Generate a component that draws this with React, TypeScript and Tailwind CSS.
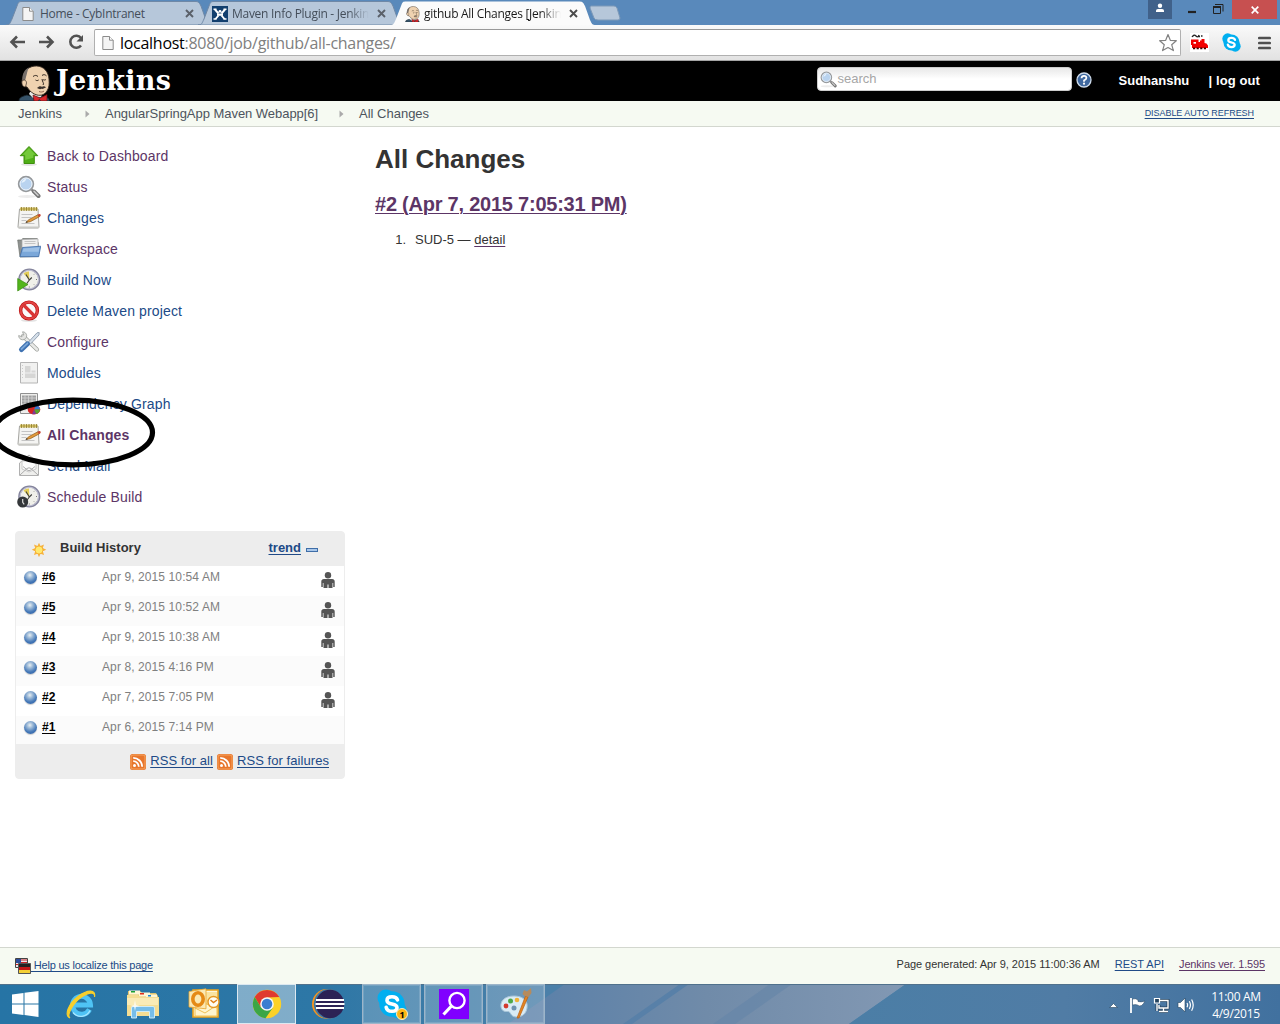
import React from "react";

const ARIAL = "font-['Liberation_Sans',Arial,sans-serif]";
const SEGOE = "font-['Open_Sans','Noto_Sans',sans-serif]";

/* ---------- Browser chrome icons ---------- */

function PageIcon({ className = "" }: { className?: string }) {
  return (
    <svg className={className} width="12" height="14" viewBox="0 0 12 14" fill="none">
      <path d="M.8.5h6.700l3.700 3.700v9.300H.8z" fill="#f4f4f4" stroke="#8b8b8b" />
      <path d="M7.500.5v3.700h3.700" stroke="#8b8b8b" fill="#fff" />
    </svg>
  );
}

function MavenIcon() {
  return (
    <svg width="16" height="16" viewBox="0 0 16 16">
      <path d="M0 0h16v16H0z" fill="#123f6e" />
      <path d="M3 3.500l3.500 4M13 3.500L9.500 7.500M3.500 13L6.500 9.500M12.500 13L9.500 9.500" stroke="#fff" strokeWidth="1.900" />
      <path d="M1.500 3.200h3M11.500 3.200h3M1.500 13h3M11.500 13h3" stroke="#fff" strokeWidth="1.500" />
      <path d="M5 7.500h6v2.300H5z" fill="#fff" />
      <circle cx="8" cy="5.300" r="1.400" fill="#fff" />
    </svg>
  );
}

function Butler({ width, height }: { width: number; height: number }) {
  return (
    <svg width={width} height={height} viewBox="0 0 33 36" preserveAspectRatio="none">
      <path d="M1 36c0-3 2-4.500 8-6l6 2 8-1c6 1 8 2 8.500 5z" fill="#36536a" stroke="#16222b" strokeWidth=".8" />
      <path d="M11 29l4 4 8-1 1-3-4-3-8 1z" fill="#e9e9e6" />
      <path d="M5 12C6 5 12 .8 18.500 1 26 1.200 30.500 7 31 14c.3 5 .4 8-2 12-2 3.500-6 5-10 4-4-.8-8-4.500-10-8-3 0-5.500-3-5-6 .2-1.500 .5-2.500 1-4z" fill="#efd2b0" stroke="#352a22" strokeWidth=".9" />
      <path d="M4.500 16C3.500 9 7 4 11 2.500 9 6 9 9 8 12l-1 4z" fill="#77706b" />
      <path d="M4 16c2.500-2 4.500-.5 4.500 2l-1 4c-3 0-4-3-3.500-6z" fill="#efd2b0" stroke="#352a22" strokeWidth=".7" />
      <path d="M15 11.500c2-1.500 3.500-1.300 5 0M24 10.500c1.500-1.300 3-1 4.500.4M17.500 15c1 .8 2.200.8 3.200 0M25 14.500c.8.700 2 .7 2.900 0M24 14c.3 3 2.500 4.500 1 6" stroke="#352a22" strokeWidth="1" fill="none" />
      <path d="M19 23c2-2 3.500-2.300 5-1.200 1.500-1 3-.5 4 .6-2.500.7-2.700 1.800-4.500 1.400-1.500.7-3 .2-4.500-.8z" fill="#3c332e" />
      <path d="M21 26.500c2 .8 3.500.6 5-.4" stroke="#7c4b3a" strokeWidth=".8" fill="none" />
      <path d="M15 30l6 2.500 1 .5 7-3.500v6.500h-6l-1.500-1.500-2 1.500H16z" fill="#d8262b" stroke="#5d1013" strokeWidth=".7" />
    </svg>
  );
}

function CloseIcon({ active = false }: { active?: boolean }) {
  return (
    <svg width="9" height="9" viewBox="0 0 9 9" className="shrink-0">
      <path d="M1 1l7 7M8 1L1 8" stroke={active ? "#4c4c4c" : "#5a6069"} strokeWidth="1.900" />
    </svg>
  );
}

type TabProps = {
  title: string;
  icon: React.ReactNode;
  active?: boolean;
  className: string;
  titleClass: string;
};

function Tab({ title, icon, active = false, className, titleClass }: TabProps) {
  return (
    <div className={`relative flex h-[25px] shrink-0 items-center pl-[14px] ${className}`}>
      <svg className="absolute inset-0 h-full w-full" viewBox="0 0 206 25" preserveAspectRatio="none">
        <path
          d="M0 25C4 25 4 23 6 19L11 6C12.500 2 13 1.500 16 1.500H189C192 1.500 193 2 195 6L200 20C202 24 202 25 206 25Z"
          fill={active ? "#fbfbfb" : "#b6c7da"}
          stroke={active ? "none" : "#6f88a6"}
          strokeWidth="1"
        />
      </svg>
      <div className="relative mt-[2px] flex w-4 shrink-0 justify-center">{icon}</div>
      <div
        className={`relative mt-[2px] overflow-hidden whitespace-nowrap text-[12px] tracking-[-0.28px] ${titleClass} ${
          active ? "text-[#1a1a1a]" : "text-[#444e5a]"
        }`}
      >
        {title}
      </div>
      <div className="relative mt-[2px] ml-auto mr-[18px]">
        <CloseIcon active={active} />
      </div>
    </div>
  );
}

function TabStrip() {
  return (
    <div className={`flex h-[25px] bg-[#5989bb] pl-[6px] ${SEGOE}`}>
      <Tab title="Home - CybIntranet" icon={<PageIcon />} className="w-[206px]" titleClass="ml-1 w-[137px]" />
      <Tab
        title="Maven Info Plugin - Jenkin"
        icon={<MavenIcon />}
        className="-ml-[14px] w-[206px]"
        titleClass="ml-1 w-[137px] [mask-image:linear-gradient(to_right,black_85%,transparent)]"
      />
      <Tab
        title="github All Changes [Jenkin"
        icon={<Butler width={15} height={16} />}
        active
        className="z-10 -ml-[14px] w-[206px]"
        titleClass="ml-1 w-[137px] [mask-image:linear-gradient(to_right,black_85%,transparent)]"
      />
      <svg width="32" height="16" viewBox="0 0 32 16" className="-ml-[7px] mt-[5px] shrink-0">
        <path d="M2 1H25Q27 1 28 3L31 13Q31 15 29 15H9Q6 15 5 13L1 3Q1 1 2 1Z" fill="#b6c7da" stroke="#7d99b8" />
      </svg>
      <div className="ml-auto flex shrink-0 items-start">
        <div className="flex h-[19px] w-6 items-center justify-center bg-[#40618a]">
          <svg className="-mt-[3px]" width="10" height="10" viewBox="0 0 10 10" fill="#fff">
            <circle cx="5" cy="2.800" r="2.200" />
            <path d="M1 9V7.500q0-1.500 2-1.500h4q2 0 2 1.500V9z" />
          </svg>
        </div>
        <svg width="60" height="19" viewBox="0 0 60 19" fill="none">
          <path d="M16 12h8" stroke="#222" strokeWidth="2.200" />
          <path d="M41.500 6.500h7v7h-7zM43 4.500h8v7" stroke="#222" />
          <path d="M41 7h8" stroke="#222" strokeWidth="2" />
        </svg>
        <div className="mr-[3px] flex h-[19px] w-[45px] items-center justify-center bg-[#c75050]">
          <svg width="8" height="8" viewBox="0 0 8 8">
            <path d="M.7.7l6.600 6.600M7.300.7L.7 7.300" stroke="#fff" strokeWidth="1.700" />
          </svg>
        </div>
      </div>
    </div>
  );
}

function Toolbar() {
  return (
    <div className="flex h-9 items-center border-b border-[#a5a5a5] bg-linear-to-b from-[#fafafa] to-[#e2e2e2] pl-[9px]">
      <svg className="-mt-px" width="78" height="20" viewBox="0 0 78 20" fill="none" stroke="#525252" strokeWidth="2.600">
        <path d="M2.500 10H16M8 4.500L2.500 10 8 15.500" />
        <path d="M30 10h13.500M38 4.500L43.500 10 38 15.500" />
        <path d="M72 6A6 6 0 1 0 72 13.500" />
        <path d="M74 3v6.500h-6.500z" fill="#525252" stroke="none" />
      </svg>
      <div className="ml-[7px] flex h-[27px] w-[1087px] shrink-0 items-center rounded-[2px] border border-[#b0b0b0] border-t-[#999] bg-white pl-[7px] pr-[2px]">
        <PageIcon />
        <div className={`ml-[6px] whitespace-nowrap text-[16px] leading-none tracking-[-0.28px] text-[#808080] ${SEGOE}`}>
          <span className="text-black">localhost</span>:8080/job/github/all-changes/
        </div>
        <svg className="ml-auto" width="20" height="20" viewBox="0 0 20 20">
          <path d="M10 1.500l2.300 5.800 6 .4-4.600 4 1.700 5.900L10 14.500l-5.400 3.100 1.700-5.900-4.600-4 6-.4z" fill="#fff" stroke="#828282" strokeWidth="1.200" strokeLinejoin="round" />
        </svg>
      </div>
      <svg className="ml-[9px] shrink-0" width="19" height="19" viewBox="0 0 19 19">
        <path d="M0 0h19v19H0z" fill="#fff" />
        <path d="M2 4q2-3 4-1t3-1M8 3.500h2M11 3h1.500" stroke="#222" strokeWidth="1.300" fill="none" />
        <path d="M1 6.500h7.500V9H10V7.500h1.500V6h3v4l2 .5 1.500 2V15H2v-3H1z" fill="#f20000" />
        <path d="M3.500 9H6v1.700H3.500z" fill="#fff" />
        <path d="M3 15.300h14" stroke="#400" strokeWidth="1.800" strokeDasharray="2.200 1.400" />
      </svg>
      <SkypeMark className="ml-[13px] shrink-0" size={19} />
      <svg className="ml-[17px] shrink-0" width="13" height="14" viewBox="0 0 13 14">
        <path d="M1.300 2h10.400M1.300 7h10.400M1.300 12h10.400" stroke="#505050" strokeWidth="2.700" strokeLinecap="round" />
      </svg>
    </div>
  );
}

function SkypeMark({ size, className = "" }: { size: number; className?: string }) {
  return (
    <svg className={className} width={size} height={size} viewBox="0 0 30 30">
      <circle cx="9" cy="9" r="8.500" fill="#00aff0" />
      <circle cx="21" cy="21" r="8.500" fill="#00aff0" />
      <circle cx="15" cy="15" r="12.700" fill="#00aff0" />
      <path d="M20.500 10.800C19.500 8.300 17.500 7.800 15 7.800c-3 0-5 1.400-5 3.600 0 2.700 2.500 3.100 5 3.600 2.800.6 5 1.300 5 3.700 0 2.300-2 3.600-5 3.600-3.200 0-5.300-1.500-5.800-4" fill="none" stroke="#fff" strokeWidth="3.600" strokeLinecap="round" />
    </svg>
  );
}

/* ---------- Jenkins header ---------- */

function Magnifier({ size }: { size: number }) {
  return (
    <svg width={size} height={size} viewBox="0 0 24 24">
      <ellipse cx="10" cy="21.500" rx="9" ry="1.500" fill="#ececec" />
      <path d="M14 14l3 3" stroke="#8d8d8d" strokeWidth="2.500" />
      <path d="M17 16.500l4.500 4.500" stroke="#777" strokeWidth="4" strokeLinecap="round" />
      <path d="M17 16.300l4 4" stroke="#d0d0d0" strokeWidth="1.500" strokeLinecap="round" />
      <circle cx="9" cy="9" r="7.300" fill="#b9d3ef" stroke="#96999c" strokeWidth="1.800" />
      <circle cx="9" cy="9" r="6" fill="none" stroke="#eef4fa" strokeWidth="1" />
      <path d="M4.500 8q1-4 5-4.500-1 3.500-5 4.500z" fill="#e6f1fb" />
    </svg>
  );
}

function Header() {
  return (
    <header className={`flex h-10 items-center bg-black pl-[18px] text-[13px] font-bold text-white ${ARIAL}`}>
      <div className="mt-[4px]">
        <Butler width={33} height={36} />
      </div>
      <div className="ml-[5px] w-[125px] font-['DejaVu_Serif',serif] text-[27px] leading-[38px] tracking-[0.25px]">Jenkins</div>
      <div className="-mt-[4px] ml-auto flex h-6 w-[255px] items-center rounded-[4px] border border-[#ccc] bg-white bg-linear-to-b from-[#e8e8e8] via-white to-white pl-[2px]">
        <Magnifier size={17} />
        <span className="ml-[1px] font-normal text-[#a6a6a6]">search</span>
      </div>
      <svg className="-mt-[2px] ml-[4px]" width="16" height="16" viewBox="0 0 16 16">
        <circle cx="8" cy="8" r="7" fill="#3f689f" stroke="#cfdcec" strokeWidth="1.300" />
        <path d="M5.500 6.200Q5.700 3.900 8 3.900t2.400 2Q10.400 7.200 8 8.400v1.300" fill="none" stroke="#fff" strokeWidth="1.700" />
        <circle cx="8" cy="11.700" r="1.100" fill="#fff" />
      </svg>
      <span className="ml-[27px] w-[90px]">Sudhanshu</span>
      <span className="mr-[20px] whitespace-nowrap tracking-[0.1px]">| log out</span>
    </header>
  );
}

function Chevron() {
  return (
    <svg width="5" height="8" viewBox="0 0 5 8">
      <path d="M.5.5L4.500 4 .5 7.500z" fill="#aaa" />
    </svg>
  );
}

function Breadcrumbs() {
  return (
    <nav className={`flex h-[26px] items-center border-b border-[#d3d7cf] bg-[#f6faf2] pl-[18px] pr-[26px] text-[13px] text-[#4d545d] ${ARIAL}`}>
      <span className="w-[67px]">Jenkins</span>
      <Chevron />
      <span className="ml-[15px] w-[234px] whitespace-nowrap tracking-[-0.04px]">AngularSpringApp Maven Webapp[6]</span>
      <Chevron />
      <span className="ml-[15px]">All Changes</span>
      <a className="ml-auto text-[9px] tracking-[-0.05px] text-[#204a87] underline underline-offset-2">DISABLE AUTO REFRESH</a>
    </nav>
  );
}

/* ---------- Side panel icons ---------- */

function UpArrow() {
  return (
    <svg width="24" height="24" viewBox="0 0 24 24">
      <ellipse cx="12" cy="20.500" rx="8" ry="1.500" fill="#e3e3e3" />
      <path d="M12 2.500l8.800 9.200H17.300V19.500H7V11.700H3.200z" fill="#4fae17" stroke="#3f8f0d" strokeLinejoin="round" />
      <path d="M12 4l6.500 6.800h-2.200v3L8.200 16v-5.200H5.500z" fill="#74c93a" />
    </svg>
  );
}

function Notepad() {
  return (
    <svg width="24" height="24" viewBox="0 0 24 24">
      <path d="M2.500 3h18.500L22 21q0 1-1 1H2q-1 0-1-1z" fill="#f4f4f2" stroke="#a5a5a1" />
      <path d="M1 20.500h21v1.500H1z" fill="#c9c9c4" />
      <path d="M3 1.500h17.500v3H3z" fill="#d3c063" />
      <path d="M4.500 1v4M7 1v4M9.500 1v4M12 1v4M14.500 1v4M17 1v4M19.500 1v4" stroke="#8d7a2c" strokeWidth=".8" />
      <path d="M4.500 8.500h11M4.500 11.500h10M4.500 14.500h5M4.500 17.500h13" stroke="#c4c4c4" />
      <path d="M9 16.500l2.500-2.700L21 8.700l1.500 2-9.200 5z" fill="#e39a3c" stroke="#8b5b1b" strokeWidth=".7" />
      <path d="M20.500 9l1.500-1q1.500-.3 1.800 1.200l-.7 1.200-1.300.6z" fill="#c54532" />
      <path d="M8.500 16.800l2.300-.6-1-1.200z" fill="#333" />
    </svg>
  );
}

function FolderIcon() {
  return (
    <svg width="24" height="24" viewBox="0 0 24 24">
      <path d="M.7 3h4l1-1.500h14.500v4h1v14L3 20z" fill="#8f9290" stroke="#6f726f" strokeWidth=".7" />
      <path d="M5 2.500l16-.5v10H5z" fill="#efefef" stroke="#a7a7a7" strokeWidth=".7" />
      <path d="M7.500 4.500h11M7.500 6.500h11" stroke="#c4c4c4" />
      <path d="M5.500 10.500L23.700 9.200l-2 10.500H3z" fill="#7aa7d9" stroke="#3d6ca8" strokeWidth=".8" />
      <path d="M6.500 11.500l16-1.200-.8 4.400H5.500z" fill="#9dc0e6" />
    </svg>
  );
}

function Clock({ variant }: { variant: "build" | "schedule" }) {
  return (
    <svg width="24" height="24" viewBox="0 0 24 24">
      <circle cx="12.300" cy="11.500" r="10" fill="#f0f0ea" stroke="#84849c" strokeWidth="2.200" />
      <circle cx="12.300" cy="11.500" r="9.300" fill="none" stroke="#c9c9dc" strokeWidth=".9" />
      <path d="M12.300 12L6.500 5.500q3-2.500 5.500-2z" fill="#e3cd57" />
      <path d="M9 6.500l3.300 5.500-2.500 3.500M12.300 12l2.500-2.500" stroke="#43433f" strokeWidth="1.100" fill="none" />
      <path d="M19 11.500h1M12.300 18.500v1M17 16.500l.6.600M17 6.500l.6-.6" stroke="#777" />
      {variant === "build" ? (
        <path d="M.7 10.500L11 16.500.7 23z" fill="#52b51c" stroke="#3b8c12" strokeWidth=".7" />
      ) : (
        <>
          <circle cx="5.700" cy="17" r="5.500" fill="#34373a" />
          <path d="M5.700 14v3.300l1.500 2" stroke="#ddd" strokeWidth="1.200" fill="none" />
        </>
      )}
    </svg>
  );
}

function NoEntry() {
  return (
    <svg width="24" height="24" viewBox="0 0 24 24">
      <ellipse cx="12" cy="21.500" rx="8" ry="1.300" fill="#e3e3e3" />
      <circle cx="12" cy="11.500" r="8.400" fill="#fafafa" stroke="#b80f0f" strokeWidth="3.400" />
      <circle cx="12" cy="11.500" r="8.400" fill="none" stroke="#e24444" strokeWidth="2.100" />
      <path d="M6 5.500l12 12" stroke="#d93636" strokeWidth="3.200" />
    </svg>
  );
}

function ToolsIcon() {
  return (
    <svg width="24" height="24" viewBox="0 0 24 24">
      <path d="M6 6l14 13.500" stroke="#9b9e9a" strokeWidth="4" strokeLinecap="round" />
      <path d="M6 6l14 13.500" stroke="#e8e9e7" strokeWidth="2.600" strokeLinecap="round" />
      <path d="M5.500 1.800A4 4 0 1 1 1.700 5.500l3 1.300 2-2z" fill="#e4e4e2" stroke="#9b9e9a" strokeWidth=".8" />
      <path d="M11.500 12L20 2.800l2.200-.3L22 5l-8.500 9" fill="#d5dfe9" stroke="#8091a5" strokeWidth=".8" />
      <path d="M4.500 19.500L10.500 13.800" stroke="#3f72b2" strokeWidth="5" strokeLinecap="round" />
      <path d="M4.500 19L10.500 13.300" stroke="#7ca7d8" strokeWidth="1.800" strokeLinecap="round" />
    </svg>
  );
}

function ModulesIcon() {
  return (
    <svg width="24" height="24" viewBox="0 0 24 24">
      <path d="M3.500 1.500h17v20.500h-17z" fill="#f1f1f0" stroke="#b5b5b5" />
      <path d="M8 5h5.500v6.500H8zM14.500 9.500h4v2h-4zM8 12.500h10.500v4.500H8z" fill="#d6d6d5" />
      <path d="M5.500 4v15" stroke="#ccc" strokeDasharray="1 2" />
    </svg>
  );
}

function GraphIcon() {
  return (
    <svg width="24" height="24" viewBox="0 0 24 24">
      <path d="M3.500 1.500h17v20h-17z" fill="#eeeeec" stroke="#909090" />
      <path d="M5 3.500h14v9H5z" fill="#a0a0a0" />
      <path d="M5 6h14M5 9h14M5 12h14M5 15h14M8 3v16M11.500 3v16M15 3v16" stroke="#d5d5d5" strokeWidth=".8" />
      <ellipse cx="17" cy="17.500" rx="6.300" ry="5" fill="#d62424" />
      <path d="M17 17.500l2-4.500q4 1 4 4.500z" fill="#3878d0" />
      <path d="M17 17.500h6q-.5 3.500-4 4.500z" fill="#59a52c" />
      <path d="M17 17.500l2 4.500-4 .3z" fill="#7d3b96" />
    </svg>
  );
}

function MailIcon() {
  return (
    <svg width="24" height="24" viewBox="0 0 24 24">
      <path d="M2.500 9L12 1 21.500 9v12.500h-19z" fill="#efefed" stroke="#b0b0b0" />
      <path d="M5 7h14v8l-7 3-7-3z" fill="#fbfbfb" stroke="#cacaca" />
      <path d="M3 21l7-6.500q2-1.500 4 0l7 6.500M6 12.500l5 4h2l5-4" fill="none" stroke="#adadad" />
    </svg>
  );
}

const BLUE = "text-[#204a87]";
const VISITED = "text-[#5c3566]";

const tasks = [
  { label: "Back to Dashboard", icon: <UpArrow />, tone: VISITED },
  { label: "Status", icon: <Magnifier size={24} />, tone: VISITED },
  { label: "Changes", icon: <Notepad />, tone: BLUE },
  { label: "Workspace", icon: <FolderIcon />, tone: VISITED },
  { label: "Build Now", icon: <Clock variant="build" />, tone: BLUE },
  { label: "Delete Maven project", icon: <NoEntry />, tone: BLUE },
  { label: "Configure", icon: <ToolsIcon />, tone: VISITED },
  { label: "Modules", icon: <ModulesIcon />, tone: BLUE },
  { label: "Dependency Graph", icon: <GraphIcon />, tone: BLUE },
  { label: "All Changes", icon: <Notepad />, tone: "font-bold text-[#5c3566]" },
  { label: "Send Mail", icon: <MailIcon />, tone: BLUE },
  { label: "Schedule Build", icon: <Clock variant="schedule" />, tone: VISITED },
];

/* ---------- Build history ---------- */

const builds = [
  { id: "#6", date: "Apr 9, 2015 10:54 AM", user: true },
  { id: "#5", date: "Apr 9, 2015 10:52 AM", user: true },
  { id: "#4", date: "Apr 9, 2015 10:38 AM", user: true },
  { id: "#3", date: "Apr 8, 2015 4:16 PM", user: true },
  { id: "#2", date: "Apr 7, 2015 7:05 PM", user: true },
  { id: "#1", date: "Apr 6, 2015 7:14 PM", user: false },
];

function SunIcon() {
  return (
    <svg width="16" height="16" viewBox="0 0 16 16">
      <path d="M8 .8L9.500 4l3.500-1.500L11.800 6l3.500 1.800-3.500 1.500 1.300 3.700-3.600-1.200L8 15.300l-1.500-3.500L3 13l1.200-3.700L.7 7.800 4.200 6 3 2.500 6.500 4z" fill="#f7b13c" />
      <circle cx="8" cy="8" r="4" fill="#ffe96e" stroke="#f4a82f" strokeWidth=".8" />
    </svg>
  );
}

function Ball() {
  return (
    <span className="mt-[5px] block h-[13px] w-[13px] rounded-full bg-[radial-gradient(circle_at_45%_32%,#e9f0f2_0%,#9fbbd8_25%,#4679b8_60%,#24549b_100%)] shadow-[0_1px_1px_#ccc]" />
  );
}

function PersonIcon() {
  return (
    <svg width="14" height="16" viewBox="0 0 14 16" fill="#555">
      <circle cx="7" cy="3.200" r="3.200" />
      <path d="M.3 9.500q0-2.500 2.700-2.500h8q2.700 0 2.700 2.500v5.500h-1.500v-4h-.7v5H7.500v-3.500h-1V16H2.500v-5h-.7v4H.3z" />
    </svg>
  );
}

function RssIcon() {
  return (
    <svg width="16" height="16" viewBox="0 0 16 16">
      <rect width="16" height="16" rx="2.500" fill="#e8762c" />
      <rect x="1" y="1" width="14" height="14" rx="2" fill="none" stroke="#f6a560" />
      <circle cx="4.500" cy="11.600" r="1.500" fill="#fff" />
      <path d="M3.200 7.200a5.500 5.500 0 0 1 5.600 5.600M3.200 3.900a9 9 0 0 1 9 8.900" fill="none" stroke="#fff" strokeWidth="1.800" />
    </svg>
  );
}

function BuildHistory() {
  return (
    <section className="mt-[18px] ml-[15px] h-[248px] w-[330px] overflow-hidden rounded-[4px] border border-[#ededed] bg-[#ededed]">
      <div className="flex h-[34px] items-center pl-[15px] text-[13px] font-bold">
        <div className="mt-[1px]">
          <SunIcon />
        </div>
        <span className="-mt-[2px] ml-[13px] text-[#333]">Build History</span>
        <a className="-mt-[2px] ml-auto text-[#204a87] underline underline-offset-2">trend</a>
        <span className="mt-[1px] ml-[5px] mr-[26px] h-[4px] w-[12px] border border-[#3f6ea8] bg-[#a9c7ea]" />
      </div>
      {builds.map((b, i) => (
        <div
          key={b.id}
          className={`flex items-start pl-[8px] pr-[9px] text-[12px] leading-[22px] ${i % 2 ? "bg-[#fbfbfb]" : "bg-white"} ${
            i === 5 ? "h-[28px]" : "h-[30px]"
          }`}
        >
          <Ball />
          <a className="ml-[5px] w-[60px] font-bold text-black underline underline-offset-2">{b.id}</a>
          <span className="tracking-[0.1px] text-[#808080]">{b.date}</span>
          <span className="mt-[6px] ml-auto">{b.user && <PersonIcon />}</span>
        </div>
      ))}
      <div className="flex h-[34px] items-center justify-end pr-[15px] text-[13px] tracking-[0.06px] text-[#204a87]">
        <div className="mt-[2px]">
          <RssIcon />
        </div>
        <a className="mr-[4px] ml-[4px] underline underline-offset-2">RSS for all</a>
        <div className="mt-[2px]">
          <RssIcon />
        </div>
        <a className="ml-[4px] underline underline-offset-2">RSS for failures</a>
      </div>
    </section>
  );
}

function SidePanel() {
  return (
    <aside className="relative w-[360px] shrink-0 pt-[14px]">
      <ul>
        {tasks.map((t) => (
          <li key={t.label} className={`flex h-[31px] items-center gap-[6px] pl-[17px] text-[14px] tracking-[0.14px] ${t.tone}`}>
            <span className="-mt-[2px]">{t.icon}</span>
            {t.label}
          </li>
        ))}
      </ul>
      <svg className="absolute top-[265px] left-0" width="160" height="80" viewBox="0 392 160 80">
        <ellipse cx="73" cy="432.500" rx="79.500" ry="32.300" fill="none" stroke="#000" strokeWidth="5.200" />
      </svg>
      <BuildHistory />
    </aside>
  );
}

function Footer() {
  return (
    <footer className="flex h-[37px] items-center border-t border-[#d3d7cf] bg-[#f6faf2] pl-[15px] pr-[15px] text-[11px] text-[#333]">
      <svg width="16" height="16" viewBox="0 0 16 16">
        <path d="M.5.5h12v9H.5z" fill="#e7e7ee" stroke="#444" />
        <path d="M1 1h5v4H1z" fill="#2c4c9c" />
        <path d="M6 2h6M6 4.500h6M1 6.500h11" stroke="#c22" />
        <path d="M3.500 5.500h12v10h-12z" fill="#222" stroke="#555" />
        <path d="M4 9h11v3H4z" fill="#c41818" />
        <path d="M4 12h11v3H4z" fill="#f3cf36" />
      </svg>
      <a className="-mt-[1px] tracking-[-0.22px] text-[#204a87] underline underline-offset-2 whitespace-pre"> Help us localize this page</a>
      <span className="-mt-[3px] ml-auto tracking-[-0.04px]">Page generated: Apr 9, 2015 11:00:36 AM</span>
      <a className="-mt-[3px] ml-[15px] text-[#204a87] underline underline-offset-2">REST API</a>
      <a className="-mt-[3px] ml-[15px] tracking-[-0.15px] text-[#5c3566] underline underline-offset-2">Jenkins ver. 1.595</a>
    </footer>
  );
}

/* ---------- Taskbar ---------- */

function IeIcon() {
  return (
    <svg className="-ml-[2px]" width="32" height="32" viewBox="0 0 32 32">
      <path d="M24.500 21.500A9 9 0 1 1 25.500 17H10" fill="none" stroke="#4fc3f5" strokeWidth="5" />
      <path d="M25 22.500A10 10 0 0 1 8 24.500" fill="none" stroke="#a6e6ff" strokeWidth="1.300" />
      <path d="M5 30C-1 28 3 16 13 8.500S31 1.500 29.500 9C30.500 4 24.500 3.500 16.500 9S1 27 5 30z" fill="#f7cf2c" stroke="#f7cf2c" strokeWidth="1.200" />
    </svg>
  );
}

function ExplorerIcon() {
  return (
    <svg className="-ml-[2px]" width="34" height="30" viewBox="0 0 34 30">
      <path d="M2 2h12l2 2h14l2 3v20H1z" fill="#dfc46f" />
      <path d="M3 1.500h11v4H3zM13 3.500h11v4H13zM20 5.500h11v4H20z" fill="#fff6d5" />
      <path d="M5 2h4v1.500H5z" fill="#1aa035" />
      <path d="M14 4h4v1.500h-4z" fill="#e12e1c" />
      <path d="M22 6h3v1.500h-3z" fill="#1686d8" />
      <path d="M1 6h11l2 2h19v19H1z" fill="#f4dd93" />
      <path d="M1 9h31v7H1z" fill="#faebb6" />
      <path d="M5.500 29V19q0-1.500 1.500-1.500h20q1.500 0 1.500 1.500v10h-5v-6.500h-13V29z" fill="#76bde9" stroke="#d3effd" strokeWidth=".9" />
      <path d="M9 11l.9 5L14 17l-4.100.8L9 22l-.9-4.200L4 17l4.100-1z" fill="#fff" opacity=".8" />
    </svg>
  );
}

function OutlookIcon() {
  return (
    <svg className="-ml-[4px] -mt-[2px]" width="32" height="31" viewBox="0 0 32 31">
      <path d="M5 2h25v27H5z" fill="#fdf7dd" stroke="#eda41c" strokeWidth="1.600" />
      <path d="M7 4h22v17H7z" fill="#fae3a0" />
      <path d="M7 20l9-5 13 5v8H7z" fill="#fff5cf" stroke="#efc053" />
      <path d="M7 20l10 5 12-8" fill="none" stroke="#efc053" />
      <path d="M1 3.500L18 .8v20L1 19z" fill="#fbe9b4" stroke="#e7a52e" strokeWidth=".8" />
      <ellipse cx="10" cy="11" rx="5.200" ry="6.300" fill="none" stroke="#e58a16" strokeWidth="3.600" />
      <circle cx="25.500" cy="14" r="5.500" fill="#fffdf2" stroke="#e59823" strokeWidth="1.400" />
      <path d="M22.500 12l3 2.500 3.500-2.500" fill="none" stroke="#e07f17" strokeWidth="1.500" />
    </svg>
  );
}

function ChromeIcon() {
  return (
    <svg width="30" height="30" viewBox="0 0 30 30">
      <circle cx="15" cy="15" r="14.200" fill="#fbd127" />
      <path d="M2.700 8A14.200 14.200 0 0 1 27.300 8L15 8.500l-6 10z" fill="#df3a2e" />
      <path d="M2.700 8A14.200 14.200 0 0 0 13.500 29.200L21 18.500H9z" fill="#3ba646" />
      <circle cx="15" cy="15" r="6.800" fill="#f6f6f6" />
      <circle cx="15" cy="15" r="5.300" fill="#397dd0" />
    </svg>
  );
}

function EclipseIcon() {
  return (
    <svg className="-ml-[3px]" width="34" height="32" viewBox="0 0 34 32">
      <circle cx="16" cy="16" r="15" fill="#f7941e" />
      <circle cx="17.800" cy="16" r="15" fill="#42799f" />
      <circle cx="19" cy="16" r="14.200" fill="#2c2255" />
      <path d="M5 12h28M4.500 16h29M5 20h28" stroke="#fff" strokeWidth="2.100" />
    </svg>
  );
}

function SearchTile() {
  return (
    <svg width="30" height="30" viewBox="0 0 30 30">
      <path d="M0 0h30v30H0z" fill="#8000ff" />
      <circle cx="18" cy="11.500" r="7.600" fill="none" stroke="#fff" strokeWidth="2.400" />
      <path d="M12.500 17L4.500 25.500" stroke="#fff" strokeWidth="3.200" />
    </svg>
  );
}

function PaintIcon() {
  return (
    <svg width="32" height="32" viewBox="0 0 32 32">
      <path d="M14 8C5 8 0 13 1 19c1 5 5 4.500 7 4.500 3 0 2 5 8 5.500 8 .5 12-6 11-13-1-5-6-8-13-8z" fill="#d9ebf5" stroke="#a9c6d9" />
      <circle cx="6" cy="18" r="2.400" fill="#d43a2e" />
      <circle cx="10.500" cy="13" r="2.500" fill="#4ea84a" />
      <circle cx="17" cy="12" r="2.300" fill="#f0b338" />
      <circle cx="14" cy="20" r="2.500" fill="#6d92b0" />
      <path d="M17 30L25.500 8l2.500 1-9 21z" fill="#e48522" stroke="#b95f12" strokeWidth=".7" />
      <path d="M22.500 6L24 2l3 1.500 4-3.500.5 5-3 4-4-1z" fill="#b68b5d" />
    </svg>
  );
}

function TaskButton({ children, look = "" }: { children: React.ReactNode; look?: string }) {
  return <div className={`relative mr-[3px] flex h-10 w-[59px] shrink-0 items-center justify-center ${look}`}>{children}</div>;
}

const OPEN = "border border-[#9db5c9] bg-white/20 outline outline-1 -outline-offset-2 outline-white/15";

function Taskbar() {
  return (
    <div className={`relative flex h-10 items-center overflow-hidden bg-[#2673a5] ${SEGOE}`}>
      <svg className="absolute inset-0 h-full w-full" viewBox="0 0 1280 40" preserveAspectRatio="none">
        <defs>
          <linearGradient id="sky" x1="0" x2="1" y1="0" y2="0">
            <stop offset="0" stopColor="#2674a5" />
            <stop offset=".25" stopColor="#2d77a6" />
            <stop offset=".42" stopColor="#4b80a9" />
          </linearGradient>
          <linearGradient id="ray" x1="0" x2="1" y1="0" y2="0">
            <stop offset="0" stopColor="#587fa9" />
            <stop offset=".5" stopColor="#708ba9" />
            <stop offset="1" stopColor="#8298b3" />
          </linearGradient>
          <linearGradient id="dusk" x1="0" x2="1" y1="0" y2="0">
            <stop offset="0" stopColor="#4b7ea6" />
            <stop offset=".5" stopColor="#507ca5" />
            <stop offset="1" stopColor="#41719f" />
          </linearGradient>
        </defs>
        <path d="M0 0h1280v40H0z" fill="url(#sky)" />
        <path d="M565 0H906L849 40H508z" fill="url(#ray)" />
        <path d="M680 0h9l-57 40h-9z" fill="#5880a8" />
        <path d="M770 0h22l-57 40h-22z" fill="#6686a8" opacity=".7" />
        <path d="M906 0h374v40H849z" fill="url(#dusk)" />
        <path d="M0 .5h1280" stroke="#50718c" />
      </svg>
      <div className="relative flex h-10 w-[52px] shrink-0 items-center pl-[12px]">
        <svg width="27" height="26" viewBox="0 0 27 26" fill="#fff">
          <path d="M0 3.500l11.500-1.600v10.600H0zM12.500 1.700L26.500 0v12.500h-14zM0 13.500h11.500v10.600L0 22.500zM12.500 13.500h14V26l-14-1.900z" />
        </svg>
      </div>
      <TaskButton><IeIcon /></TaskButton>
      <TaskButton><ExplorerIcon /></TaskButton>
      <TaskButton><OutlookIcon /></TaskButton>
      <TaskButton look="-ml-px mr-[4px] border border-[#dce8f0] bg-white/40"><ChromeIcon /></TaskButton>
      <TaskButton><EclipseIcon /></TaskButton>
      <TaskButton look={OPEN}>
        <SkypeMark size={30} />
        <span className="absolute right-[12px] bottom-[3px] flex h-[12px] w-[12px] items-center justify-center rounded-full border border-[#fff0c0] bg-[#fdb515] text-[9px] leading-none font-bold text-black">1</span>
      </TaskButton>
      <TaskButton look={OPEN}><SearchTile /></TaskButton>
      <TaskButton look={OPEN}><PaintIcon /></TaskButton>
      <div className="relative ml-auto flex shrink-0 items-center">
        <svg className="mt-[1px]" width="86" height="20" viewBox="0 0 86 20" fill="none">
          <path d="M.5 12.500L4.500 8.500l4 4z" fill="#fff" stroke="#24435e" strokeWidth=".6" />
          <path d="M22 3v15" stroke="#fff" strokeWidth="1.800" />
          <path d="M23.500 4q3-1 5.500 1v1.500q3 1 7-.5-1.500 3-3.500 4.500-2 1-4-.5-2-.8-5 0z" fill="#fff" stroke="#24435e" strokeWidth=".5" />
          <path d="M50.500 5.500H59v7.500h-9v-3M54.500 13v3M50 16.500h9M48 9v7" stroke="#24435e" strokeWidth="3" />
          <path d="M50.500 5.500H59v7.500h-9v-3M54.500 13v3M50 16.500h9M48 9v7" stroke="#fff" strokeWidth="1.400" />
          <path d="M45.500 3.500h5v4.500h-5z" fill="#24435e" stroke="#fff" strokeWidth="1.200" />
          <path d="M69 7.500h2.500L76 3v14l-4.500-4.500H69z" fill="#fff" stroke="#24435e" strokeWidth=".6" />
          <path d="M78 8q1.200 2 0 4.200M80.300 6.200q2.300 3.800 0 7.700M82.600 4.500q3.200 5.500 0 11.200" stroke="#fff" strokeWidth="1.200" />
        </svg>
        <div className="mt-[1px] ml-[9px] mr-[12px] w-[64px] text-center text-[12px] leading-[17px] tracking-[-0.3px] text-white">
          <div>11:00 AM</div>
          <div>4/9/2015</div>
        </div>
      </div>
    </div>
  );
}

export default function App() {
  return (
    <div className="flex h-[1024px] w-[1280px] flex-col overflow-hidden bg-white">
      <TabStrip />
      <Toolbar />
      <Header />
      <Breadcrumbs />
      <div className={`flex min-h-0 flex-1 flex-col text-[#333] ${ARIAL}`}>
        <div className="flex flex-1">
          <SidePanel />
          <main className="pl-[15px] pt-[15px]">
            <h1 className="text-[26px] leading-[34px] font-bold">All Changes</h1>
            <h2 className="mt-[16px] text-[20px] leading-[24px] font-bold tracking-[-0.23px] text-[#5c3566] underline decoration-1 underline-offset-2">
              #2 (Apr 7, 2015 7:05:31 PM)
            </h2>
            <ol className="mt-[14px] text-[13px] leading-[20px]">
              <li className="flex">
                <span className="w-[40px] pr-[9px] text-right">1.</span>
                <span>
                  SUD-5 — <a className="text-[#333] underline decoration-[#5c3566] underline-offset-2">detail</a>
                </span>
              </li>
            </ol>
          </main>
        </div>
        <Footer />
      </div>
      <Taskbar />
    </div>
  );
}
